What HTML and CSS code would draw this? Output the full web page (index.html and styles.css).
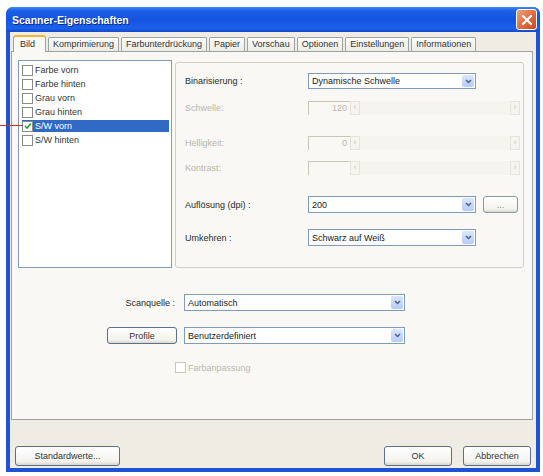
FILE: index.html
```html
<!DOCTYPE html>
<html lang="de">
<head>
    <meta charset="UTF-8">
    <title>Scanner-Eigenschaften</title>
    <link rel="stylesheet" href="styles.css">
</head>
<body>
    <div class="marker"></div>
    <div class="window">
        <div class="titlebar">
            <span class="title">Scanner-Eigenschaften</span>
            <div class="close">
                <svg width="12" height="12" viewBox="0 0 12 12"><path d="M2 2 L10 10 M10 2 L2 10" stroke="#fff" stroke-width="2.2" stroke-linecap="round"/></svg>
            </div>
        </div>
        <div class="client">
            <div class="tabs">
                <div class="tab active">Bild</div>
                <div class="tab">Komprimierung</div>
                <div class="tab">Farbunterdrückung</div>
                <div class="tab">Papier</div>
                <div class="tab">Vorschau</div>
                <div class="tab">Optionen</div>
                <div class="tab">Einstellungen</div>
                <div class="tab">Informationen</div>
            </div>
            <div class="panel">
                <div class="top">
                    <ul class="pagelist">
                        <li><span class="item"><span class="check"></span>Farbe vorn</span></li>
                        <li><span class="item"><span class="check"></span>Farbe hinten</span></li>
                        <li><span class="item"><span class="check"></span>Grau vorn</span></li>
                        <li><span class="item"><span class="check"></span>Grau hinten</span></li>
                        <li><span class="item selected"><span class="check checked"><svg width="8" height="8" viewBox="0 0 8 8"><path d="M1 4 L3 6 L7 1.5" fill="none" stroke="#21a121" stroke-width="1.6"/></svg></span>S/W vorn</span></li>
                        <li><span class="item"><span class="check"></span>S/W hinten</span></li>
                    </ul>
                    <div class="group">
                        <div class="row r1">
                            <span class="label">Binarisierung :</span>
                            <div class="combo wide"><span class="value">Dynamische Schwelle</span><span class="arrow"><svg width="7" height="5" viewBox="0 0 7 5"><path d="M1 1 L3.5 3.5 L6 1" fill="none" stroke="#4d6185" stroke-width="1.5"/></svg></span></div>
                        </div>
                        <div class="row r2">
                            <span class="label disabled">Schwelle:</span>
                            <div class="edit">120</div>
                            <div class="hscroll"><span class="sarrow">‹</span><span class="sarrow">›</span></div>
                        </div>
                        <div class="row r3">
                            <span class="label disabled">Helligkeit:</span>
                            <div class="edit">0</div>
                            <div class="hscroll"><span class="sarrow">‹</span><span class="sarrow">›</span></div>
                        </div>
                        <div class="row r4">
                            <span class="label disabled">Kontrast:</span>
                            <div class="edit"></div>
                            <div class="hscroll"><span class="sarrow">‹</span><span class="sarrow">›</span></div>
                        </div>
                        <div class="row r5">
                            <span class="label">Auflösung (dpi) :</span>
                            <div class="combo wide tall"><span class="value">200</span><span class="arrow"><svg width="7" height="5" viewBox="0 0 7 5"><path d="M1 1 L3.5 3.5 L6 1" fill="none" stroke="#4d6185" stroke-width="1.5"/></svg></span></div>
                            <div class="button dots">...</div>
                        </div>
                        <div class="row r6">
                            <span class="label">Umkehren :</span>
                            <div class="combo wide tall"><span class="value">Schwarz auf Weiß</span><span class="arrow"><svg width="7" height="5" viewBox="0 0 7 5"><path d="M1 1 L3.5 3.5 L6 1" fill="none" stroke="#4d6185" stroke-width="1.5"/></svg></span></div>
                        </div>
                    </div>
                </div>
                <div class="source">
                    <span class="slabel">Scanquelle :</span>
                    <div class="combo tall"><span class="value">Automatisch</span><span class="arrow"><svg width="7" height="5" viewBox="0 0 7 5"><path d="M1 1 L3.5 3.5 L6 1" fill="none" stroke="#4d6185" stroke-width="1.5"/></svg></span></div>
                    <div class="button profile">Profile</div>
                    <div class="combo tall"><span class="value">Benutzerdefiniert</span><span class="arrow"><svg width="7" height="5" viewBox="0 0 7 5"><path d="M1 1 L3.5 3.5 L6 1" fill="none" stroke="#4d6185" stroke-width="1.5"/></svg></span></div>
                    <span></span>
                    <label class="optcheck"><span class="check off"></span>Farbanpassung</label>
                </div>
            </div>
            <div class="footer">
                <div class="button defaults">Standardwerte...</div>
                <div class="spacer"></div>
                <div class="button ok">OK</div>
                <div class="button cancel">Abbrechen</div>
            </div>
        </div>
    </div>
</body>
</html>
```

FILE: styles.css
```css
html, body { margin: 0; padding: 0; }
body { width: 543px; height: 476px; background: #fff; font-family: "Liberation Sans", Arial, sans-serif; font-size: 9px; color: #2a2a2a; padding: 7px 3px 4px 6px; box-sizing: border-box; }

.marker { position: absolute; left: 0; top: 125px; width: 23px; height: 1px; background: #c8322c; }

.window { width: 534px; height: 465px; display: flex; flex-direction: column; background: #1f53d6; border-radius: 7px 7px 0 0; box-sizing: border-box; }
.titlebar { height: 25px; flex: none; display: flex; align-items: center; padding: 0 3px 0 6px; border-radius: 7px 7px 0 0; background: linear-gradient(#3d8cf6 0%, #1a5fe6 15%, #1453df 50%, #1b61eb 85%, #1448c9 100%); }
.title { flex: 1; color: #fff; font-weight: bold; font-size: 10.5px; text-shadow: 1px 1px 0 #0a2a8a; }
.close { width: 19px; height: 19px; border: 1px solid #fff; border-radius: 3px; background: linear-gradient(135deg, #f0a17c, #e0643a 60%, #c94a22); display: flex; align-items: center; justify-content: center; }

.client { flex: 1; margin: 0 4px 4px 4px; background: #efede3; display: flex; flex-direction: column; }

.tabs { display: flex; align-items: flex-end; padding: 3px 0 0 3px; height: 19px; box-sizing: border-box; gap: 2px; position: relative; z-index: 1; }
.tab { height: 13px; line-height: 13px; padding: 0 4px; border: 1px solid #9aa3a6; border-bottom: none; border-radius: 2px 2px 0 0; background: linear-gradient(#fdfdfb, #ecebe3); color: #333; white-space: nowrap; }
.tab.active { height: 17px; line-height: 15px; padding: 0 10px 0 6px; margin-bottom: -1px; background: #f9f8f4; border-top: 2px solid #f2b53b; border-radius: 3px 3px 0 0; box-sizing: border-box; }

.panel { height: 369px; margin: 0 3px 0 1px; background: #f9f8f4; border: 1px solid #9aa3a6; box-sizing: border-box; padding: 8px 0 0 6px; }

.top { display: flex; gap: 3px; height: 208px; }
.pagelist { list-style: none; margin: 0; padding: 2px 2px 0 3px; width: 154px; height: 208px; box-sizing: border-box; background: #fff; border: 1px solid #7f9db9; }
.pagelist li { height: 14px; display: flex; align-items: center; }
.item { flex: 1; height: 12px; display: flex; align-items: center; gap: 2px; color: #333; }
.item.selected { background: #316ac5; color: #fff; }
.check { width: 9px; height: 9px; border: 1px solid #8a8a8a; background: #fff; display: inline-flex; align-items: center; justify-content: center; flex: none; }
.check.off { border-color: #cac8bb; }

.group { flex: 1; margin: 2px 8px 0 0; height: 206px; border: 1px solid #d0d0bf; border-radius: 3px; box-sizing: border-box; padding: 10px 0 0 9px; }
.row { display: flex; align-items: center; }
.r1 { height: 16px; }
.r2, .r3, .r4 { height: 14px; }
.r2 { margin-top: 12px; }
.r3 { margin-top: 21px; }
.r4 { margin-top: 11px; }
.r5 { height: 17px; margin-top: 21px; }
.r6 { height: 17px; margin-top: 16px; }
.label { width: 123px; flex: none; }
.disabled { color: #b8b6aa; }

.combo { height: 16px; display: flex; align-items: center; background: #fff; border: 1px solid #7f9db9; box-sizing: border-box; padding: 1px; }
.combo.wide { width: 168px; }
.combo.tall { height: 17px; }
.value { flex: 1; padding-left: 2px; color: #222; }
.arrow { width: 12px; height: 100%; border-radius: 2px; background: linear-gradient(#dbe6fd, #b6cbf8); display: flex; align-items: center; justify-content: center; }

.edit { width: 42px; height: 14px; box-sizing: border-box; border-top: 1px solid #c9c6b6; border-left: 1px solid #c9c6b6; text-align: right; padding-right: 3px; line-height: 13px; color: #b8b6aa; }
.hscroll { width: 170px; height: 14px; display: flex; justify-content: space-between; align-items: center; background: #f5f4ee; }
.sarrow { width: 8px; height: 12px; border: 1px solid #e6e4da; font-size: 9px; line-height: 11px; text-align: center; color: #c8c6b9; }

.button { height: 20px; box-sizing: border-box; border: 1px solid #5b6f8f; border-radius: 3px; background: linear-gradient(#ffffff, #f3f2ec 80%, #d9d7cc); display: flex; align-items: center; justify-content: center; color: #333; }
.dots { width: 35px; height: 17px; margin-left: 7px; color: #888; border-color: #8b99ad; }

.source { display: grid; grid-template-columns: 70px 221px; column-gap: 7px; row-gap: 16px; margin: 26px 0 0 89px; align-items: center; }
.slabel { text-align: right; padding-right: 2px; }
.profile { height: 17px; }
.optcheck { display: flex; align-items: center; gap: 2px; color: #bcb9ad; margin: 2px 0 0 -9px; }

.footer { display: flex; align-items: flex-start; padding: 26px 5px 0 5px; gap: 11px; }
.spacer { flex: 1; }
.defaults { width: 105px; }
.ok, .cancel { width: 68px; }
```
